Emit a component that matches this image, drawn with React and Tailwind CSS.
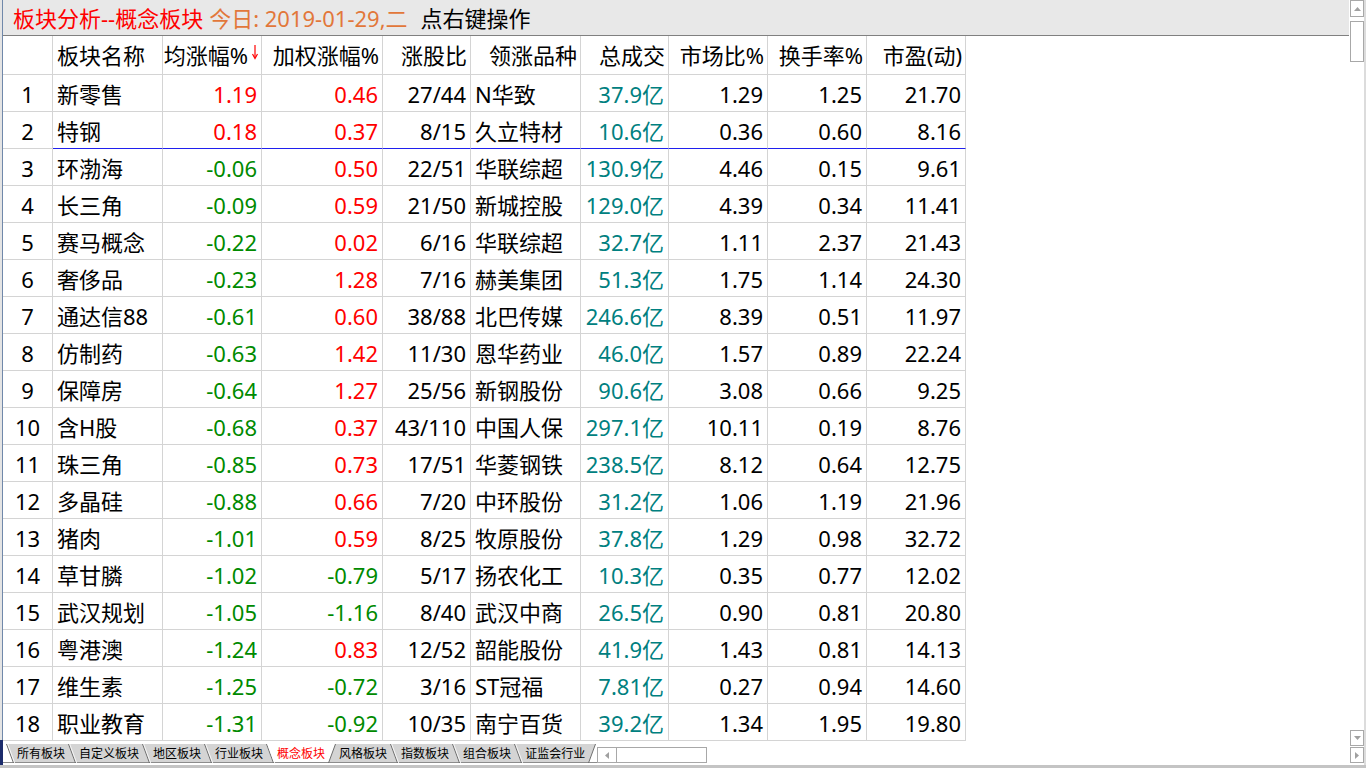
import React from "react";

const rows = [
  [1, "新零售", "1.19", "0.46", "27/44", "N华致", "37.9亿", "1.29", "1.25", "21.70"],
  [2, "特钢", "0.18", "0.37", "8/15", "久立特材", "10.6亿", "0.36", "0.60", "8.16"],
  [3, "环渤海", "-0.06", "0.50", "22/51", "华联综超", "130.9亿", "4.46", "0.15", "9.61"],
  [4, "长三角", "-0.09", "0.59", "21/50", "新城控股", "129.0亿", "4.39", "0.34", "11.41"],
  [5, "赛马概念", "-0.22", "0.02", "6/16", "华联综超", "32.7亿", "1.11", "2.37", "21.43"],
  [6, "奢侈品", "-0.23", "1.28", "7/16", "赫美集团", "51.3亿", "1.75", "1.14", "24.30"],
  [7, "通达信88", "-0.61", "0.60", "38/88", "北巴传媒", "246.6亿", "8.39", "0.51", "11.97"],
  [8, "仿制药", "-0.63", "1.42", "11/30", "恩华药业", "46.0亿", "1.57", "0.89", "22.24"],
  [9, "保障房", "-0.64", "1.27", "25/56", "新钢股份", "90.6亿", "3.08", "0.66", "9.25"],
  [10, "含H股", "-0.68", "0.37", "43/110", "中国人保", "297.1亿", "10.11", "0.19", "8.76"],
  [11, "珠三角", "-0.85", "0.73", "17/51", "华菱钢铁", "238.5亿", "8.12", "0.64", "12.75"],
  [12, "多晶硅", "-0.88", "0.66", "7/20", "中环股份", "31.2亿", "1.06", "1.19", "21.96"],
  [13, "猪肉", "-1.01", "0.59", "8/25", "牧原股份", "37.8亿", "1.29", "0.98", "32.72"],
  [14, "草甘膦", "-1.02", "-0.79", "5/17", "扬农化工", "10.3亿", "0.35", "0.77", "12.02"],
  [15, "武汉规划", "-1.05", "-1.16", "8/40", "武汉中商", "26.5亿", "0.90", "0.81", "20.80"],
  [16, "粤港澳", "-1.24", "0.83", "12/52", "韶能股份", "41.9亿", "1.43", "0.81", "14.13"],
  [17, "维生素", "-1.25", "-0.72", "3/16", "ST冠福", "7.81亿", "0.27", "0.94", "14.60"],
  [18, "职业教育", "-1.31", "-0.92", "10/35", "南宁百货", "39.2亿", "1.34", "1.95", "19.80"],
];

const W = [
  "w-[50px]",
  "w-[110px]",
  "w-[99px]",
  "w-[121px]",
  "w-[88px]",
  "w-[110px]",
  "w-[88px]",
  "w-[99px]",
  "w-[99px]",
  "w-[99px]",
];

const tabs = ["所有板块", "自定义板块", "地区板块", "行业板块", "概念板块", "风格板块", "指数板块", "组合板块", "证监会行业"];
const ACTIVE = 4;

function signColor(v) {
  return v.startsWith("-") ? "text-[#008a00]" : "text-[#ff0000]";
}

function cellColor(i, v) {
  if (i === 2 || i === 3) return signColor(v);
  if (i === 6) return "text-[#008080]";
  return "text-black";
}

function cellAlign(i) {
  if (i === 0) return "justify-center";
  if (i === 1) return "justify-start pl-[4px]";
  if (i === 5) return "justify-start pl-[4px]";
  return "justify-end pr-[4px]";
}

function SortArrow() {
  return (
    <svg width="6" height="15" viewBox="0 0 6 15" className="ml-[4px] -mt-[6px]">
      <line x1="3" y1="0" x2="3" y2="13" stroke="#ff0000" strokeWidth="1.2" />
      <polyline points="0.5,9 3,13.5 5.5,9" fill="none" stroke="#ff0000" strokeWidth="1.2" />
    </svg>
  );
}

function HeaderRow() {
  const heads = ["", "板块名称", "均涨幅%", "加权涨幅%", "涨股比", "领涨品种", "总成交", "市场比%", "换手率%", "市盈(动)"];
  return (
    <div className="flex h-[39px] shrink-0">
      {heads.map((h, i) => (
        <div
          key={i}
          className={`${W[i]} shrink-0 h-full border-r border-b border-[#d4d4d4] flex items-center ${
            i === 1 ? "justify-start pl-[4px]" : i === 0 ? "justify-center" : "justify-end pr-[3px]"
          }`}
        >
          <span className="whitespace-nowrap leading-none">{h}</span>
          {i === 2 && <SortArrow />}
        </div>
      ))}
    </div>
  );
}

function DataRow({ r }) {
  const blue = r[0] === 2;
  return (
    <div className="flex h-[37px] shrink-0">
      {r.map((v, i) => (
        <div
          key={i}
          className={`${W[i]} shrink-0 h-full border-r border-b ${
            blue && i > 0 ? "border-r-[#d4d4d4] border-b-[#2020ee]" : "border-[#d4d4d4]"
          } flex items-center pt-[1px] ${cellAlign(i)} ${cellColor(i, String(v))}`}
        >
          <span className="whitespace-nowrap leading-none">{v}</span>
        </div>
      ))}
    </div>
  );
}

function Sep({ kind, left, right }) {
  const lf = left === "none" ? "#ffffff" : left;
  const rf = right === "none" ? "#ffffff" : right;
  if (kind === "back") {
    return (
      <svg width="14" height="19" viewBox="0 0 14 19" className="shrink-0 block">
        <polygon points="0,0 3.5,0 10.5,19 0,19" fill={lf} />
        <polygon points="3.5,0 14,0 14,19 10.5,19" fill={rf} />
        <line x1="0" y1="18.5" x2="14" y2="18.5" stroke="#8c8c8c" strokeWidth="1" />
        <line x1="3.5" y1="0" x2="10.5" y2="19" stroke="#6e6e6e" strokeWidth="1" />
        <line x1="4.7" y1="0" x2="11.7" y2="19" stroke="#ffffff" strokeWidth="0.8" />
      </svg>
    );
  }
  return (
    <svg width="14" height="19" viewBox="0 0 14 19" className="shrink-0 block">
      <polygon points="0,0 10.5,0 3.5,19 0,19" fill={lf} />
      <polygon points="10.5,0 14,0 14,19 3.5,19" fill={rf} />
      <line x1="0" y1="18.5" x2="14" y2="18.5" stroke="#8c8c8c" strokeWidth="1" />
      <line x1="10.5" y1="0" x2="3.5" y2="19" stroke="#6e6e6e" strokeWidth="1" />
    </svg>
  );
}

function TabBar() {
  const grey = "#d4d4d4";
  const col = (i) => (i === ACTIVE ? "#ffffff" : grey);
  const items = [];
  items.push(<Sep key="s0" kind="back" left="none" right={col(0)} />);
  tabs.forEach((t, i) => {
    items.push(
      <div
        key={t}
        className={`h-[19px] shrink-0 flex items-center pt-[2px] border-b border-[#8c8c8c] text-[12px] leading-none ${
          i === ACTIVE ? "bg-white text-[#ff0000]" : "bg-[#d4d4d4] text-black"
        }`}
      >
        <span className="whitespace-nowrap">{t}</span>
      </div>
    );
    if (i === tabs.length - 1) {
      items.push(<Sep key={"s" + (i + 1)} kind="fwd" left={col(i)} right="none" />);
    } else if (i === ACTIVE) {
      items.push(<Sep key={"s" + (i + 1)} kind="fwd" left={col(i)} right={col(i + 1)} />);
    } else {
      items.push(<Sep key={"s" + (i + 1)} kind="back" left={col(i)} right={col(i + 1)} />);
    }
  });
  return (
    <div className="h-[24px] shrink-0 flex items-start pt-[3px] bg-white">
      <div className="flex items-start">{items}</div>
      <div className="ml-[-2px] mt-[3px] flex h-[16px] w-[110px] border border-[#a8a8a8] bg-white">
        <div className="w-[19px] h-full border-r border-[#a8a8a8] flex items-center justify-center">
          <svg width="4" height="7" viewBox="0 0 4 7">
            <polygon points="4,0 0,3.5 4,7" fill="#a0a0a0" />
          </svg>
        </div>
        <div className="flex-1" />
      </div>
    </div>
  );
}

function VScroll() {
  return (
    <div className="w-[17px] shrink-0 h-full flex flex-col bg-white border-r-2 border-[#dcdcdc]">
      <div className="ml-[1px] w-[14px] h-[17px] border border-[#a8a8a8] flex items-center justify-center">
        <svg width="7" height="4" viewBox="0 0 7 4">
          <polygon points="0,4 3.5,0 7,4" fill="#a0a0a0" />
        </svg>
      </div>
      <div className="ml-[1px] mt-[4px] w-[14px] h-[41px] border border-[#a8a8a8] bg-white" />
      <div className="flex-1" />
      <div className="ml-[1px] w-[14px] h-[16px] border border-[#a8a8a8] flex items-center justify-center">
        <svg width="7" height="4" viewBox="0 0 7 4">
          <polygon points="0,0 7,0 3.5,4" fill="#a0a0a0" />
        </svg>
      </div>
      <div className="ml-[1px] mt-[1px] w-[14px] h-[16px] border border-[#a8a8a8] flex items-center justify-center">
        <svg width="4" height="7" viewBox="0 0 4 7">
          <polygon points="0,0 4,3.5 0,7" fill="#a0a0a0" />
        </svg>
      </div>
      <div className="h-[2px]" />
    </div>
  );
}

export default function App() {
  return (
    <div className="w-[1366px] h-[768px] overflow-hidden bg-white flex flex-col font-['Noto_Sans','Noto_Sans_CJK_SC',sans-serif] text-[22px] text-black">
      <div className="h-[765px] flex shrink-0">
        <div className="w-[3px] shrink-0 h-full flex flex-col">
          <div className="flex-1 flex">
            <div className="w-[2px] bg-[#e4e4e4]" />
            <div className="w-[1px] bg-[#7088aa]" />
          </div>
          <div className="h-[25px] bg-[#1c2c6c]" />
        </div>
        <div className="flex-1 h-full flex flex-col min-w-0">
          <div className="h-[36px] shrink-0 bg-[#e8e8e8] border-b border-[#808080] flex items-center pl-[10px] whitespace-nowrap leading-none">
            <span className="text-[#ff0000]">板块分析--概念板块</span>
            <span className="text-[#e2773a] ml-[6px]">今日: 2019-01-29,二</span>
            <span className="text-black ml-[13px]">点右键操作</span>
          </div>
          <div className="flex-1 flex flex-col min-h-0">
            <HeaderRow />
            {rows.map((r) => (
              <DataRow key={r[0]} r={r} />
            ))}
          </div>
          <TabBar />
        </div>
        <VScroll />
      </div>
      <div className="h-[3px] shrink-0 bg-[#c4c4c4]" />
    </div>
  );
}
